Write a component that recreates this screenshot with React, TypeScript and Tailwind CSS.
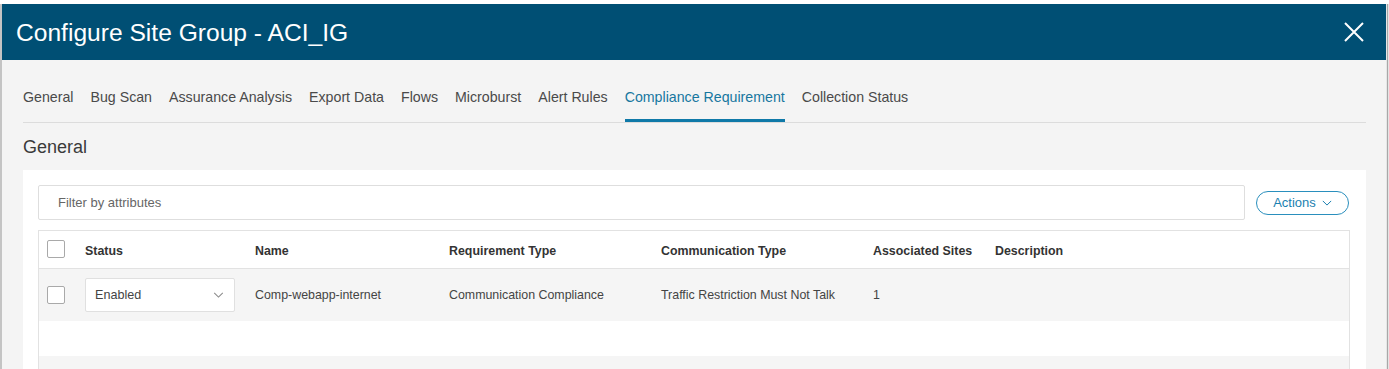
import React from "react";

const TABS = [
  "General",
  "Bug Scan",
  "Assurance Analysis",
  "Export Data",
  "Flows",
  "Microburst",
  "Alert Rules",
  "Compliance Requirement",
  "Collection Status",
];

const ACTIVE_TAB = "Compliance Requirement";

const COLS = "grid grid-cols-[46px_170px_194px_212px_212px_122px_1fr] items-center";

const Checkbox = ({ className = "" }: { className?: string }) => (
  <span
    className={`ml-[8px] block h-[18px] w-[18px] rounded-[2px] border-[1.5px] border-[#a9a9a9] bg-white ${className}`}
  />
);

const Chevron = ({ className }: { className?: string }) => (
  <svg viewBox="0 0 12 7" className={className} fill="none" stroke="currentColor" strokeWidth="1.2">
    <path d="M1 1l5 5 5-5" />
  </svg>
);

export default function App() {
  return (
    <div
      className="flex h-[369px] w-[1389px] flex-col overflow-hidden bg-white"
      style={{ fontFamily: '"Liberation Sans", Arial, sans-serif' }}
    >
      <div className="h-[4px] shrink-0 bg-white" />
      <div className="flex min-h-0 flex-1">
        <div className="w-[2px] shrink-0 bg-[#c4c4c4]" />

        <div className="flex min-w-0 flex-1 flex-col bg-[#f4f4f4]">
          {/* header */}
          <div className="flex h-[56px] shrink-0 items-center justify-between bg-[#004f74] pl-[14px] pr-[22px]">
            <h1 className="pt-[2px] text-[24.6px] leading-none text-white">Configure Site Group - ACI_IG</h1>
            <svg viewBox="0 0 20 20" className="h-[20px] w-[20px]" stroke="white" strokeWidth="2">
              <path d="M1 1l18 18M19 1L1 19" />
            </svg>
          </div>

          <div className="flex flex-col px-[21px] pr-[20px]">
            {/* tabs */}
            <div className="flex gap-[17px] border-b border-[#dcdcdc]">
              {TABS.map((t) => (
                <div
                  key={t}
                  className={[
                    "border-b-[3px] pt-[27px] pb-[12px] text-[14.2px] leading-[20px]",
                    t === ACTIVE_TAB
                      ? "border-[#0f79a8] text-[#17779f]"
                      : "border-transparent text-[#4a4a4a]",
                  ].join(" ")}
                >
                  {t}
                </div>
              ))}
            </div>

            <h2 className="mt-[12px] mb-[11px] text-[18px] leading-[24px] text-[#3a3a3a]">General</h2>

            {/* card */}
            <div className="bg-white pt-[15px] pl-[15px] pr-[16px]">
              <div className="flex items-center gap-[11px]">
                <div className="flex h-[35px] flex-1 items-center rounded-[2px] border border-[#dedede] pl-[19px] text-[13px] text-[#666]">
                  Filter by attributes
                </div>
                <button
                  type="button"
                  className="mr-[1px] flex h-[24px] w-[93px] items-center justify-center gap-[6px] rounded-full border border-[#2a8fbd] text-[13px] text-[#1a7fb0]"
                >
                  Actions
                  <Chevron className="h-[6px] w-[10px]" />
                </button>
              </div>

              <div className="mt-[10px] border border-b-0 border-[#e2e2e2] text-[12.4px]">
                <div className={`${COLS} h-[38px] border-b border-[#e2e2e2] pt-[3px] font-bold text-[#333]`}>
                  <Checkbox className="-mt-[4px]" />
                  <div>Status</div>
                  <div>Name</div>
                  <div>Requirement Type</div>
                  <div>Communication Type</div>
                  <div>Associated Sites</div>
                  <div>Description</div>
                </div>

                <div className={`${COLS} h-[52px] bg-[#f5f5f5] text-[#444]`}>
                  <Checkbox />
                  <div className="flex h-[34px] w-[150px] items-center justify-between rounded-[2px] border border-[#e0e0e0] bg-white pl-[9px] pr-[10px] text-[12.6px]">
                    Enabled
                    <Chevron className="h-[6px] w-[11px] text-[#8a8a8a]" />
                  </div>
                  <div>Comp-webapp-internet</div>
                  <div>Communication Compliance</div>
                  <div>Traffic Restriction Must Not Talk</div>
                  <div>1</div>
                  <div />
                </div>

                <div className="h-[35px] bg-white" />
                <div className="h-[52px] bg-[#f5f5f5]" />
              </div>
            </div>
          </div>
        </div>

        <div className="w-[1px] shrink-0 bg-[#e6e6e6]" />
        <div className="w-[1px] shrink-0 bg-[#a8a8a8]" />
        <div className="w-[1px] shrink-0 bg-[#e4e4e4]" />
      </div>
    </div>
  );
}
